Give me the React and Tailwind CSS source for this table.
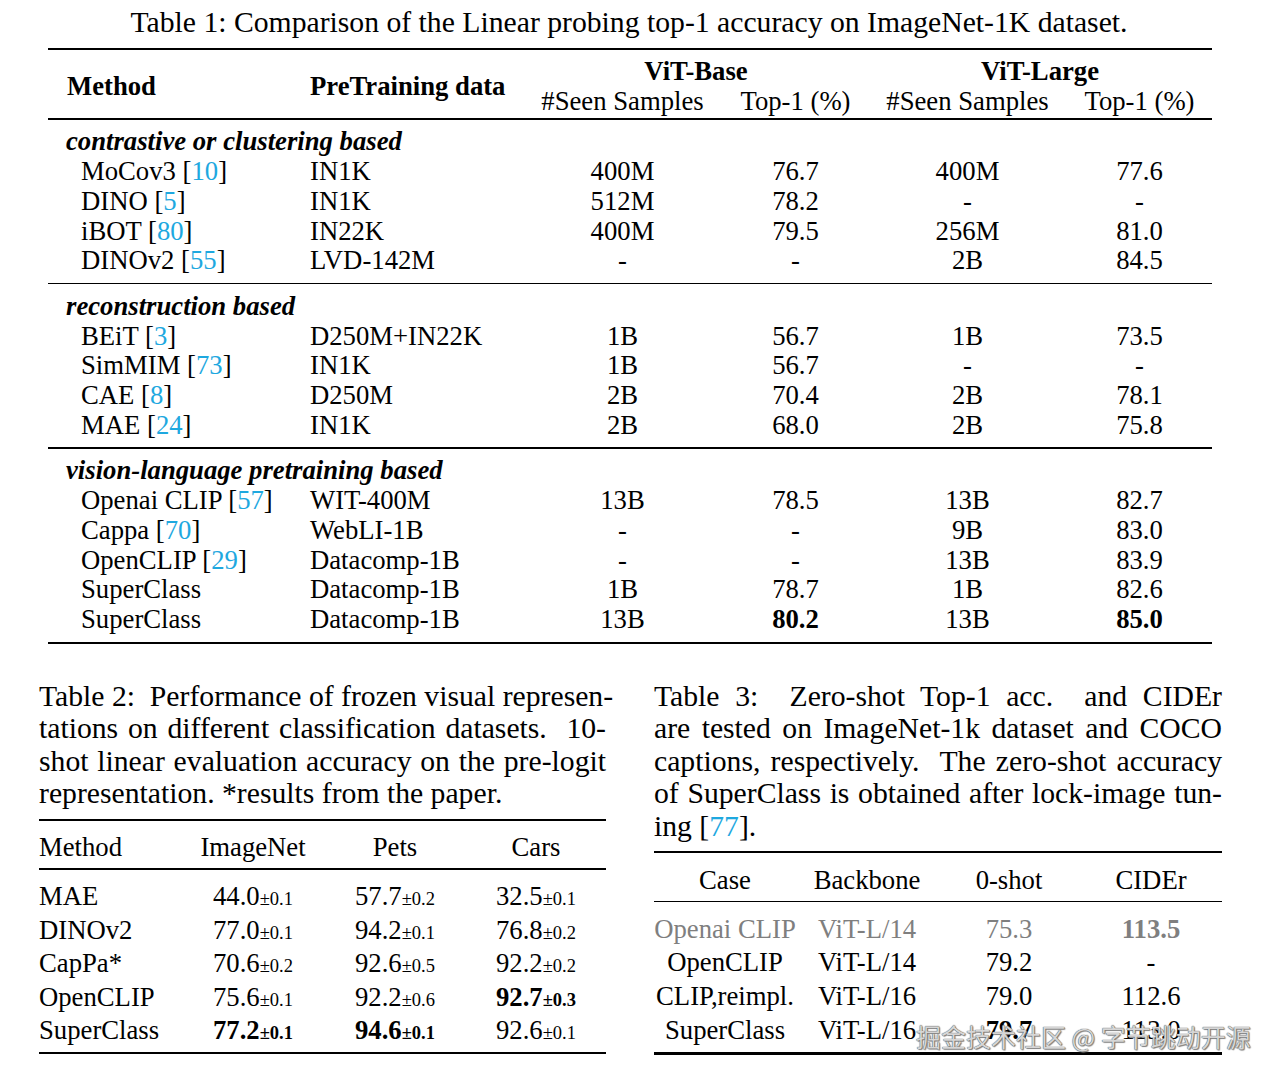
import React from 'react';

const Cite = ({ n }) => (
  <>
    [<span className="text-[#1ea8df]">{n}</span>]
  </>
);

const T1_COLS = 'grid grid-cols-[262px_226px_173px_173px_171px_159px]';

const groups = [
  {
    label: 'contrastive or clustering based',
    rows: [
      ['MoCov3', 10, 'IN1K', '400M', '76.7', '400M', '77.6'],
      ['DINO', 5, 'IN1K', '512M', '78.2', '-', '-'],
      ['iBOT', 80, 'IN22K', '400M', '79.5', '256M', '81.0'],
      ['DINOv2', 55, 'LVD-142M', '-', '-', '2B', '84.5'],
    ],
  },
  {
    label: 'reconstruction based',
    rows: [
      ['BEiT', 3, 'D250M+IN22K', '1B', '56.7', '1B', '73.5'],
      ['SimMIM', 73, 'IN1K', '1B', '56.7', '-', '-'],
      ['CAE', 8, 'D250M', '2B', '70.4', '2B', '78.1'],
      ['MAE', 24, 'IN1K', '2B', '68.0', '2B', '75.8'],
    ],
  },
  {
    label: 'vision-language pretraining based',
    rows: [
      ['Openai CLIP', 57, 'WIT-400M', '13B', '78.5', '13B', '82.7'],
      ['Cappa', 70, 'WebLI-1B', '-', '-', '9B', '83.0'],
      ['OpenCLIP', 29, 'Datacomp-1B', '-', '-', '13B', '83.9'],
      ['SuperClass', null, 'Datacomp-1B', '1B', '78.7', '1B', '82.6'],
      ['SuperClass', null, 'Datacomp-1B', '13B', '80.2', '13B', '85.0', true],
    ],
  },
];

const t2rows = [
  ['MAE', ['44.0', '0.1'], ['57.7', '0.2'], ['32.5', '0.1']],
  ['DINOv2', ['77.0', '0.1'], ['94.2', '0.1'], ['76.8', '0.2']],
  ['CapPa*', ['70.6', '0.2'], ['92.6', '0.5'], ['92.2', '0.2']],
  ['OpenCLIP', ['75.6', '0.1'], ['92.2', '0.6'], ['92.7', '0.3', true]],
  ['SuperClass', ['77.2', '0.1', true], ['94.6', '0.1', true], ['92.6', '0.1']],
];

const t3rows = [
  ['Openai CLIP', 'ViT-L/14', '75.3', '113.5', false, true],
  ['OpenCLIP', 'ViT-L/14', '79.2', '-'],
  ['CLIP,reimpl.', 'ViT-L/16', '79.0', '112.6'],
  ['SuperClass', 'ViT-L/16', '79.7', '113.0', true],
];

function Pm({ v }) {
  const [main, err, bold] = v;
  return (
    <span className={bold ? 'font-bold' : ''}>
      {main}
      <span className="text-[18.5px] leading-[0]">±{err}</span>
    </span>
  );
}

function Line({ children, last }) {
  return (
    <div className={`h-[32.5px] leading-[32.5px] whitespace-nowrap ${last ? 'text-left' : 'text-justify [text-align-last:justify]'}`}>
      {children}
    </div>
  );
}

export default function App() {
  return (
    <div className="relative w-[1280px] h-[1079px] bg-white text-black font-['Liberation_Serif',serif] overflow-hidden">
      {/* Table 1 */}
      <div className="ml-[48px] w-[1164px] pt-[6px]">
        <div className="h-[32px] leading-[32px] text-[29.7px] text-center pr-[2px]">
          Table 1: Comparison of the Linear probing top-1 accuracy on ImageNet-1K dataset.
        </div>
        <div className="mt-[10px] h-[2px] bg-black" />
        <div className="text-[26.7px] leading-[29.7px]">
          <div className={`${T1_COLS} pt-[7px] pb-[2px]`}>
            <div className="row-span-2 flex items-center pl-[19px] font-bold">Method</div>
            <div className="row-span-2 flex items-center font-bold">PreTraining data</div>
            <div className="col-span-2 text-center pr-[26px] font-bold">ViT-Base</div>
            <div className="col-span-2 text-center pr-[14px] font-bold">ViT-Large</div>
            <div className="text-center">#Seen Samples</div>
            <div className="text-center">Top-1 (%)</div>
            <div className="text-center">#Seen Samples</div>
            <div className="text-center pl-[14px]">Top-1 (%)</div>
          </div>
          {groups.map((g) => (
            <div key={g.label}>
              <div className="h-[1.5px] bg-black" />
              <div className="pt-[7.5px] pb-[7px]">
                <div className="pl-[18px] italic font-bold">{g.label}</div>
                {g.rows.map((r, i) => (
                  <div key={i} className={T1_COLS}>
                    <div className="pl-[33px] whitespace-nowrap">
                      {r[0]}
                      {r[1] != null && (
                        <>
                          {' '}
                          <Cite n={r[1]} />
                        </>
                      )}
                    </div>
                    <div>{r[2]}</div>
                    <div className="text-center">{r[3]}</div>
                    <div className={`text-center ${r[7] ? 'font-bold' : ''}`}>{r[4]}</div>
                    <div className="text-center">{r[5]}</div>
                    <div className={`text-center pl-[14px] ${r[7] ? 'font-bold' : ''}`}>{r[6]}</div>
                  </div>
                ))}
              </div>
            </div>
          ))}
          <div className="h-[2px] bg-black" />
        </div>
      </div>

      {/* Tables 2 and 3 */}
      <div className="mt-[36px] flex">
        {/* Table 2 */}
        <div className="ml-[39px] w-[567px]">
          <div className="text-[29.7px]">
            <Line>Table 2:&nbsp; Performance of frozen visual represen-</Line>
            <Line>tations on different classification datasets.&nbsp; 10-</Line>
            <Line>shot linear evaluation accuracy on the pre-logit</Line>
            <Line last>representation. *results from the paper.</Line>
          </div>
          <div className="mt-[9px] h-[2.5px] bg-black" />
          <div className="text-[26.7px] leading-[33.5px]">
            <div className="grid grid-cols-[143px_142px_142px_140px] h-[33.5px] mt-[10px] mb-[3.5px]">
              <div>Method</div>
              <div className="text-center">ImageNet</div>
              <div className="text-center">Pets</div>
              <div className="text-center">Cars</div>
            </div>
            <div className="h-[1.5px] bg-black" />
            <div className="pt-[10.5px] pb-[4px]">
              {t2rows.map((r) => (
                <div key={r[0]} className="grid grid-cols-[143px_142px_142px_140px] h-[33.5px]">
                  <div>{r[0]}</div>
                  <div className="text-center"><Pm v={r[1]} /></div>
                  <div className="text-center"><Pm v={r[2]} /></div>
                  <div className="text-center"><Pm v={r[3]} /></div>
                </div>
              ))}
            </div>
            <div className="h-[2.5px] bg-black" />
          </div>
        </div>

        {/* Table 3 */}
        <div className="ml-[48px] w-[568px]">
          <div className="text-[29.7px]">
            <Line>Table 3:&nbsp; Zero-shot Top-1 acc.&nbsp; and CIDEr</Line>
            <Line>are tested on ImageNet-1k dataset and COCO</Line>
            <Line>captions, respectively.&nbsp; The zero-shot accuracy</Line>
            <Line>of SuperClass is obtained after lock-image tun-</Line>
            <Line last>
              ing <Cite n={77} />.
            </Line>
          </div>
          <div className="mt-[8.5px] h-[2.5px] bg-black" />
          <div className="text-[26.7px] leading-[33.5px]">
            <div className="grid grid-cols-[142px_142px_142px_142px] h-[33.5px] mt-[10.5px] mb-[3.5px]">
              <div className="text-center">Case</div>
              <div className="text-center">Backbone</div>
              <div className="text-center">0-shot</div>
              <div className="text-center">CIDEr</div>
            </div>
            <div className="h-[1.5px] bg-black" />
            <div className="pt-[10.5px] pb-[5px]">
              {t3rows.map((r) => (
                <div
                  key={r[0]}
                  className={`grid grid-cols-[142px_142px_142px_142px] h-[33.67px] ${r[5] ? 'text-[#7f7f7f]' : ''}`}
                >
                  <div className="text-center whitespace-nowrap">{r[0]}</div>
                  <div className="text-center">{r[1]}</div>
                  <div className={`text-center ${r[4] ? 'font-bold' : ''}`}>{r[2]}</div>
                  <div className={`text-center ${r[5] ? 'font-bold' : ''}`}>{r[3]}</div>
                </div>
              ))}
            </div>
            <div className="h-[2.5px] bg-black" />
          </div>
        </div>
      </div>

      {/* watermark */}
      <div className="absolute left-[916px] top-[1019px] text-[25px] leading-[34px] whitespace-nowrap text-[#d6d6d6] font-['Noto_Sans_CJK_SC',sans-serif] [text-shadow:0_0_1px_#5a5a5a,0_0_1px_#5a5a5a,1px_1px_1px_#8a8a8a]">
        掘金技术社区 @ 字节跳动开源
      </div>
    </div>
  );
}
